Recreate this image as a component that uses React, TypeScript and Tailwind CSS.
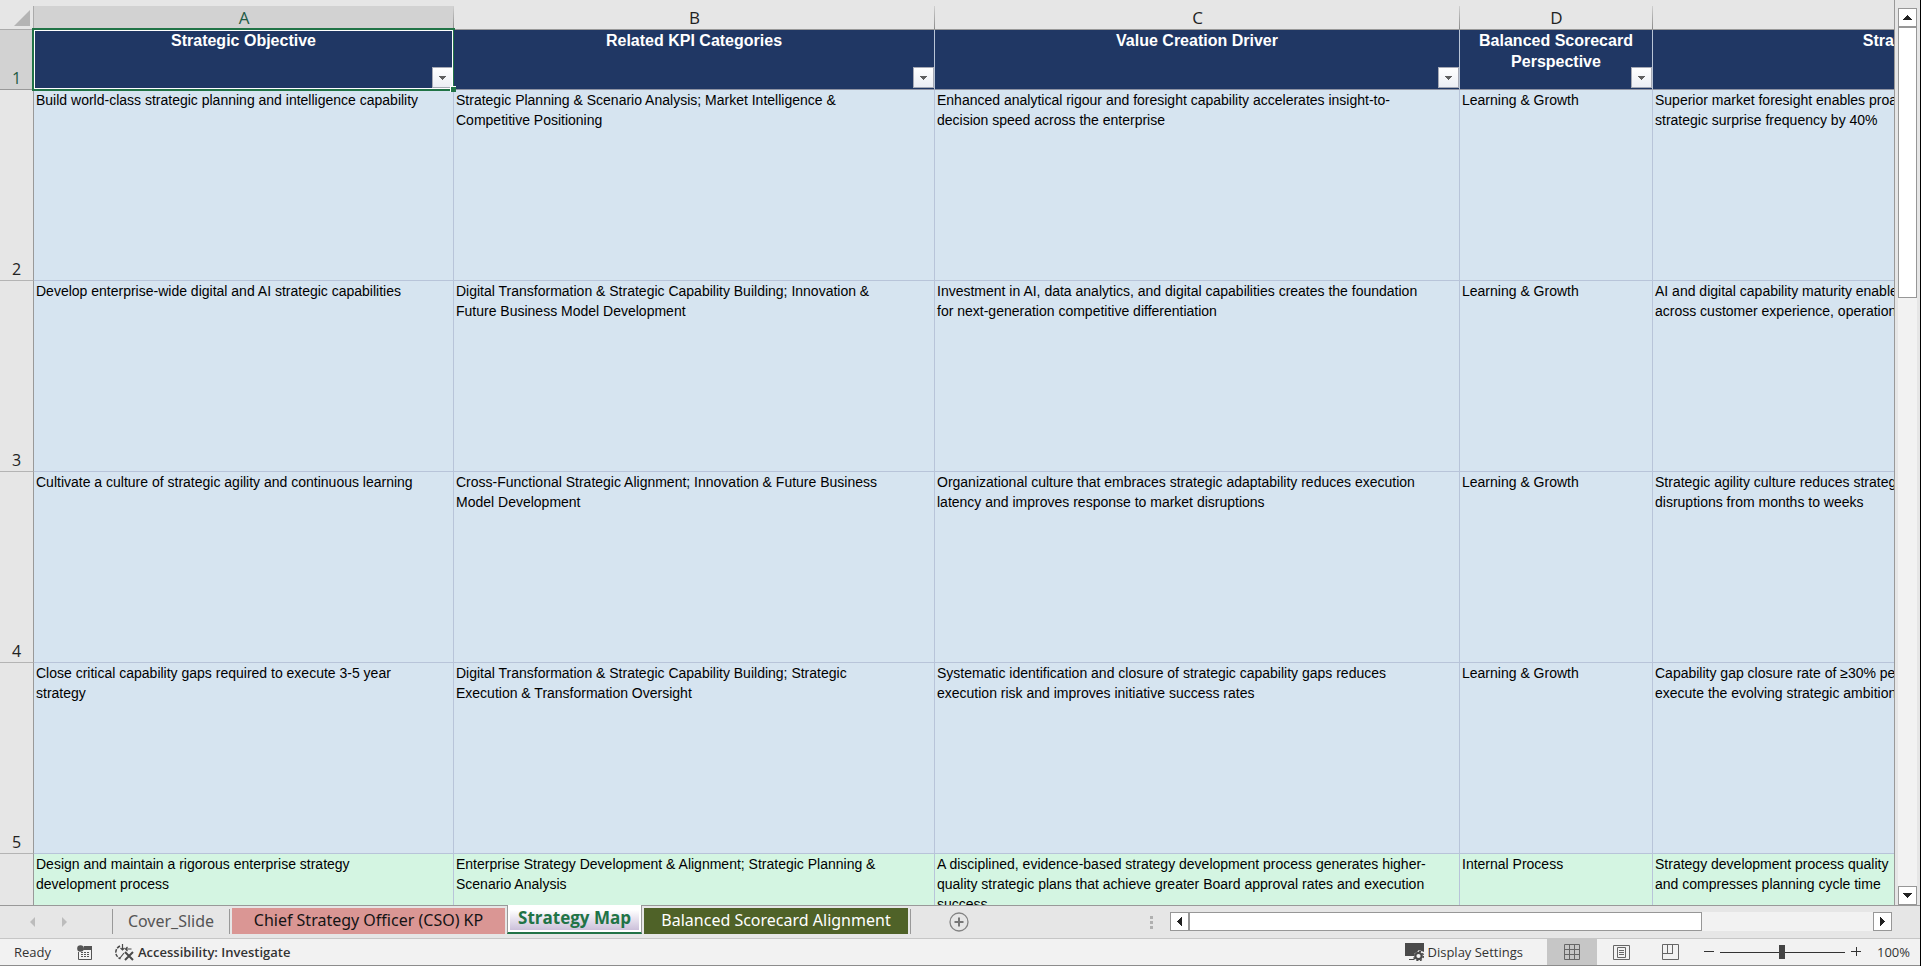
import React from "react";

type Row = { n: number; tone: string; cells: string[] };

const columns = [
  { letter: "A", title: "Strategic Objective" },
  { letter: "B", title: "Related KPI Categories" },
  { letter: "C", title: "Value Creation Driver" },
  { letter: "D", title: "Balanced Scorecard Perspective" },
  { letter: "E", title: "Strategic Outcome" },
];

const rows: Row[] = [
  {
    n: 2,
    tone: "bg-[#d6e4f0]",
    cells: [
      "Build world-class strategic planning and intelligence capability",
      "Strategic Planning & Scenario Analysis; Market Intelligence &\nCompetitive Positioning",
      "Enhanced analytical rigour and foresight capability accelerates insight-to-\ndecision speed across the enterprise",
      "Learning & Growth",
      "Superior market foresight enables proactive moves\nstrategic surprise frequency by 40%",
    ],
  },
  {
    n: 3,
    tone: "bg-[#d6e4f0]",
    cells: [
      "Develop enterprise-wide digital and AI strategic capabilities",
      "Digital Transformation & Strategic Capability Building; Innovation &\nFuture Business Model Development",
      "Investment in AI, data analytics, and digital capabilities creates the foundation\nfor next-generation competitive differentiation",
      "Learning & Growth",
      "AI and digital capability maturity enables growth\nacross customer experience, operations",
    ],
  },
  {
    n: 4,
    tone: "bg-[#d6e4f0]",
    cells: [
      "Cultivate a culture of strategic agility and continuous learning",
      "Cross-Functional Strategic Alignment; Innovation & Future Business\nModel Development",
      "Organizational culture that embraces strategic adaptability reduces execution\nlatency and improves response to market disruptions",
      "Learning & Growth",
      "Strategic agility culture reduces strategic response\ndisruptions from months to weeks",
    ],
  },
  {
    n: 5,
    tone: "bg-[#d6e4f0]",
    cells: [
      "Close critical capability gaps required to execute 3-5 year\nstrategy",
      "Digital Transformation & Strategic Capability Building; Strategic\nExecution & Transformation Oversight",
      "Systematic identification and closure of strategic capability gaps reduces\nexecution risk and improves initiative success rates",
      "Learning & Growth",
      "Capability gap closure rate of ≥30% per year\nexecute the evolving strategic ambition",
    ],
  },
  {
    n: 6,
    tone: "bg-[#d4f5e2]",
    cells: [
      "Design and maintain a rigorous enterprise strategy\ndevelopment process",
      "Enterprise Strategy Development & Alignment; Strategic Planning &\nScenario Analysis",
      "A disciplined, evidence-based strategy development process generates higher-\nquality strategic plans that achieve greater Board approval rates and execution\nsuccess",
      "Internal Process",
      "Strategy development process quality\nand compresses planning cycle time",
    ],
  },
];

function FilterButton({ title }: { title: string }) {
  return (
    <button
      aria-label={`Filter ${title}`}
      className="absolute right-0 bottom-px flex h-[21px] w-[21px] items-center justify-center border border-[#a6a9b5] bg-linear-to-b from-white to-[#eceef4]"
    >
      <svg width="7" height="4" viewBox="0 0 7 4" shapeRendering="crispEdges">
        <path d="M0 0h7v1H6v1H5v1H4v1H3V3H2V2H1V1H0z" fill="#5f5f5f" />
      </svg>
    </button>
  );
}

function Grid() {
  return (
    <table className="w-[2216px] table-fixed border-separate border-spacing-0">
      <colgroup>
        <col className="w-[34px]" />
        <col className="w-[420px]" />
        <col className="w-[481px]" />
        <col className="w-[525px]" />
        <col className="w-[193px]" />
        <col className="w-[563px]" />
      </colgroup>
      <thead>
        <tr className="h-6">
          <th className="border-b border-[#ababab] bg-[#e6e6e6] p-0 align-bottom">
            <button aria-label="Select all" className="flex w-full justify-end pr-1 pb-[3px]">
              <svg width="16" height="16" viewBox="0 0 16 16">
                <path d="M16 0v16H0z" fill="#b4b4b4" />
              </svg>
            </button>
          </th>
          {columns.map((c, i) => (
            <th
              key={c.letter}
              scope="col"
              className={
                "relative border-b border-[#999999] p-0 text-center font-['Open_Sans',sans-serif] text-[17px] leading-[23px] font-normal " +
                (i === 0 ? "bg-[#d2d2d2] text-[#1f5c45]" : "bg-[#e6e6e6] text-[#222222]")
              }
            >
              {i === 0 && <span className="absolute inset-y-0 -left-px w-px bg-[#ababab]" />}
              {c.letter}
              <span className="absolute inset-y-0 right-0 w-px bg-linear-to-b from-[#d0d0d0] to-[#8c8c8c]" />
            </th>
          ))}
        </tr>
      </thead>
      <tbody>
        <tr className="h-[60px]">
          <th
            scope="row"
            className="border-r border-b border-[#999999] bg-[#d2d2d2] p-0 align-bottom font-['Open_Sans',sans-serif] text-base leading-[22px] font-normal text-[#1f5c45]"
          >
            1
          </th>
          {columns.map((c, i) => (
            <td
              key={c.letter}
              className="relative h-[60px] border-r border-b border-r-[#b8c4d6] border-b-[#8e93a3] bg-[#203764] p-0 text-center align-top text-base leading-[21px] font-bold text-white"
            >
              <div className="px-2">{c.title}</div>
              <FilterButton title={c.title} />
              {i === 0 && (
                <>
                  <span className="pointer-events-none absolute -top-0.5 -right-0.5 -bottom-0.5 -left-0.5 border-2 border-[#217346]" />
                  <span className="pointer-events-none absolute inset-0 border border-white" />
                  <span className="absolute -right-[3px] -bottom-[3px] z-10 size-[6px] border-t border-l border-white bg-[#217346]" />
                </>
              )}
            </td>
          ))}
        </tr>
        {rows.map((r) => (
          <tr key={r.n} className="h-[191px]">
            <th
              scope="row"
              className="border-r border-b border-r-[#999999] border-b-[#b4b4b4] bg-[#e6e6e6] p-0 align-bottom font-['Open_Sans',sans-serif] text-base leading-[22px] font-normal text-[#222222]"
            >
              {r.n}
            </th>
            {r.cells.map((t, i) => (
              <td
                key={i}
                className={
                  "border-r border-b border-[#b8c4d9] p-0 pl-0.5 align-top text-sm leading-5 whitespace-pre text-black " +
                  r.tone
                }
              >
                {t}
              </td>
            ))}
          </tr>
        ))}
      </tbody>
    </table>
  );
}

function VerticalScroll() {
  return (
    <div className="flex w-[25px] shrink-0 flex-col pt-2 pr-[3px] pl-[3px]">
      <button aria-label="Scroll up" className="flex h-[19px] items-center justify-center border border-[#979797] bg-white">
        <svg width="9" height="5" viewBox="0 0 9 5" shapeRendering="crispEdges">
          <path d="M4 0h1v1h1v1h1v1h1v1h1v1H0V4h1V3h1V2h1V1h1z" fill="#222" />
        </svg>
      </button>
      <div className="flex-1 bg-[#f2f2f2]">
        <div className="h-[31.5%] border border-[#979797] bg-white" />
      </div>
      <button aria-label="Scroll down" className="flex h-[19px] items-center justify-center border border-[#979797] bg-white">
        <svg width="9" height="5" viewBox="0 0 9 5" shapeRendering="crispEdges">
          <path d="M0 0h9v1H8v1H7v1H6v1H5v1H4V4H3V3H2V2H1V1H0z" fill="#222" />
        </svg>
      </button>
    </div>
  );
}

function SheetTabs() {
  return (
    <div className="flex h-8 shrink-0 items-stretch bg-[#e6e6e6] font-['Noto_Sans',sans-serif] text-base leading-6">
      <div className="flex w-28 shrink-0 items-center gap-[27px] pl-[30px]">
        <button aria-label="Previous sheets">
          <svg width="5" height="10" viewBox="0 0 5 10"><path d="M5 0v10L0 5z" fill="#bcbcbc" /></svg>
        </button>
        <button aria-label="Next sheets">
          <svg width="5" height="10" viewBox="0 0 5 10"><path d="M0 0v10l5-5z" fill="#bcbcbc" /></svg>
        </button>
      </div>
      <button className="mt-[3px] mb-1 w-[118px] shrink-0 border-x border-[#999999] pb-1.5 text-[#555555]">Cover_Slide</button>
      <button className="mt-0.5 mb-1 ml-0.5 w-[273px] shrink-0 bg-[#da9694] pb-1.5 text-[#141414]">Chief Strategy Officer (CSO) KP</button>
      <button className="-mt-px mb-1 ml-0.5 flex w-[135px] shrink-0 border-x border-b-2 border-x-[#999999] border-b-[#217346] bg-white px-0.5 pb-0.5 font-['Open_Sans',sans-serif] text-[17px] font-bold text-[#217346]">
        <span className="h-full flex-1 bg-linear-to-b from-white from-20% to-[#ccc0da] pt-px">Strategy Map</span>
      </button>
      <button className="mt-0.5 mb-1 ml-0.5 w-[264px] shrink-0 bg-[#4f6228] pb-1.5 text-white">Balanced Scorecard Alignment</button>
      <span className="mt-[3px] mb-1 ml-0.5 w-px bg-[#999999]" />
      <button aria-label="New sheet" className="ml-[38px] shrink-0">
        <svg width="20" height="20" viewBox="0 0 20 20" fill="none">
          <circle cx="10" cy="10" r="9" stroke="#848484" strokeWidth="1.3" />
          <path d="M5.5 10h9M10 5.5v9" stroke="#777" strokeWidth="2" />
        </svg>
      </button>
      <div className="flex flex-1 items-center justify-end">
        <svg width="3" height="13" viewBox="0 0 3 13"><path d="M0 0h3v3H0zM0 5h3v3H0zM0 10h3v3H0z" fill="#b0b0b0" /></svg>
      </div>
      <div className="mt-1.5 mr-7 ml-[17px] flex h-[19px] w-[722px] bg-[#f2f2f2]">
        <button aria-label="Scroll left" className="flex w-[19px] items-center justify-center border border-[#979797] bg-white">
          <svg width="5" height="9" viewBox="0 0 5 9" shapeRendering="crispEdges">
            <path d="M5 0v9H4V8H3V7H2V6H1V5H0V4h1V3h1V2h1V1h1V0z" fill="#222" />
          </svg>
        </button>
        <div className="flex-1">
          <div className="h-full w-3/4 border border-[#979797] bg-white" />
        </div>
        <button aria-label="Scroll right" className="flex w-[19px] items-center justify-center border border-[#979797] bg-white">
          <svg width="5" height="9" viewBox="0 0 5 9" shapeRendering="crispEdges">
            <path d="M0 0v9h1V8h1V7h1V6h1V5h1V4H4V3H3V2H2V1H1V0z" fill="#222" />
          </svg>
        </button>
      </div>
    </div>
  );
}

function StatusBar() {
  return (
    <div className="flex h-7 shrink-0 items-center border-t border-b border-t-[#c6c6c6] border-b-[#8c8c8c] bg-[#f2f2f2] font-['Open_Sans',sans-serif] text-[13px] leading-[26px] text-[#333333]">
      <span className="ml-3.5 w-[63px]">Ready</span>
      <button aria-label="Record macro">
        <svg width="15" height="15" viewBox="0 0 15 15" fill="none">
          <path d="M7 1h8v4H6z" fill="#555" />
          <path d="M1.5 7v7.5h13V4" stroke="#555" />
          <circle cx="3.5" cy="3.5" r="3.3" fill="#555" />
          <path d="M4 7.5h2M7 7.5h2M10 7.5h2M4 9.5h2M7 9.5h2M10 9.5h2M4 11.5h2M7 11.5h2M10 11.5h2" stroke="#555" />
        </svg>
      </button>
      <button className="ml-[23px] flex items-center gap-[3px] font-semibold">
        <svg width="20" height="17" viewBox="0 0 20 17" fill="none" stroke="#4a4a4a">
          <path d="M5 2C2 3.500 .8 6 .8 8.500S2.500 13.500 5.500 14.800" strokeWidth="1.500" strokeDasharray="3.500 1.200" />
          <path d="M7.500 0v6M5.500 4l2 2 2-2M16.500 5h-6M12.500 3l-2 2 2 2M5 14l4-5" strokeWidth="1.200" />
          <path d="M10 8l8 8M18 8l-8 8" strokeWidth="2" />
        </svg>
        Accessibility: Investigate
      </button>
      <button className="ml-auto flex items-center gap-0.5">
        <svg width="20" height="18" viewBox="0 0 20 18">
          <path d="M0 0h19v9l-5-2-5 4v2H0z" fill="#4a4a4a" />
          <path d="M4 16h5v1H4z" fill="#4a4a4a" />
          <circle cx="13.500" cy="13" r="3.200" fill="none" stroke="#4a4a4a" strokeWidth="2.200" />
          <circle cx="13.500" cy="13" r="4.800" fill="none" stroke="#4a4a4a" strokeWidth="1.500" strokeDasharray="2 1.770" />
        </svg>
        Display Settings
      </button>
      <button aria-label="Normal view" className="ml-6 flex h-full w-[50px] items-center justify-center bg-[#c6c6c6]">
        <svg width="16" height="16" viewBox="0 0 16 16" fill="none" stroke="#666">
          <path d="M.5 .5h15v15H.5zM5.500 0v16M10.500 0v16M0 5.500h16M0 10.500h16" />
        </svg>
      </button>
      <button aria-label="Page layout view" className="flex h-full w-[49px] items-center justify-center">
        <svg width="17" height="15" viewBox="0 0 17 15" fill="none" stroke="#666">
          <path d="M.5 .5h16v14H.5zM4.500 2.500h8v10h-8zM6 5.500h5M6 7.500h5M6 9.500h5" />
        </svg>
      </button>
      <button aria-label="Page break preview" className="flex h-full w-[50px] items-center justify-center">
        <svg width="17" height="16" viewBox="0 0 17 16" fill="none" stroke="#666">
          <path d="M.5 .5h16v15H.5zM5.500 .5v9M10.500 .5v9M0 9.500h11" />
        </svg>
      </button>
      <button aria-label="Zoom out" className="ml-2">
        <svg width="10" height="10" viewBox="0 0 10 10"><path d="M0 4h10v1H0z" fill="#333" /></svg>
      </button>
      <div className="relative mx-1.5 flex h-full w-[125px] items-center">
        <span className="h-px w-full bg-[#333333]" />
        <input
          type="range"
          aria-label="Zoom"
          defaultValue={50}
          className="absolute inset-0 h-full w-full appearance-none bg-transparent [&::-webkit-slider-thumb]:h-3.5 [&::-webkit-slider-thumb]:w-1.5 [&::-webkit-slider-thumb]:appearance-none [&::-webkit-slider-thumb]:bg-[#444444]"
        />
      </div>
      <button aria-label="Zoom in">
        <svg width="10" height="10" viewBox="0 0 10 10"><path d="M0 4h10v1H0zM5 0h1v9H5z" fill="#333" /></svg>
      </button>
      <span className="mr-2.5 ml-4">100%</span>
    </div>
  );
}

export default function App() {
  return (
    <div className="flex h-screen flex-col overflow-hidden border-r border-black bg-[#e6e6e6] font-['Liberation_Sans',Arial,sans-serif]">
      <div className="flex min-h-0 flex-1 border-b border-[#999999]">
        <div className="min-w-0 flex-1 overflow-hidden border-r border-[#999999] pt-1.5">
          <Grid />
        </div>
        <VerticalScroll />
      </div>
      <SheetTabs />
      <StatusBar />
    </div>
  );
}
